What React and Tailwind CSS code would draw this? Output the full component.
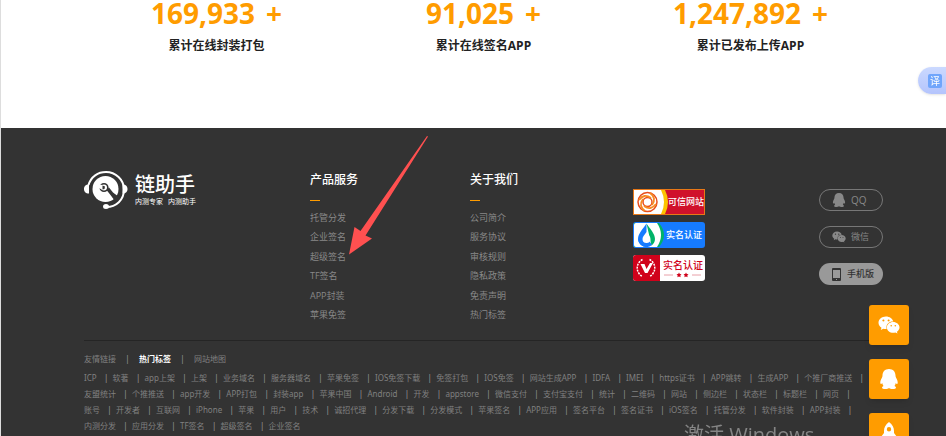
import { FaWeixin } from "react-icons/fa";

const stats = [
  { value: "169,933", label: "累计在线封装打包" },
  { value: "91,025", label: "累计在线签名APP" },
  { value: "1,247,892", label: "累计已发布上传APP" },
];

const products = ["托管分发", "企业签名", "超级签名", "TF签名", "APP封装", "苹果免签"];
const about = ["公司简介", "服务协议", "审核规则", "隐私政策", "免责声明", "热门标签"];

const tagRows = [
  ["ICP", "软著", "app上架", "上架", "业务域名", "服务器域名", "苹果免签", "IOS免签下载", "免签打包", "IOS免签", "网站生成APP", "IDFA", "IMEI", "https证书", "APP跳转", "生成APP", "个推厂商推送"],
  ["友盟统计", "个推推送", "app开发", "APP打包", "封装app", "苹果中国", "Android", "开发", "appstore", "微信支付", "支付宝支付", "统计", "二维码", "网站", "侧边栏", "状态栏", "标题栏", "网页"],
  ["账号", "开发者", "互联网", "iPhone", "苹果", "用户", "技术", "诚招代理", "分发下载", "分发模式", "苹果签名", "APP应用", "签名平台", "签名证书", "iOS签名", "托管分发", "软件封装", "APP封装"],
  ["内测分发", "应用分发", "TF签名", "超级签名", "企业签名"],
];

function PenguinIcon({ className }) {
  return (
    <svg viewBox="0 0 20 20" className={className} fill="currentColor" aria-hidden="true">
      <path d="M10 0c4 0 6.500 2.800 6.500 6.500 0 1 .2 1.600.7 2.500 1 1.700 1.600 3.300 1.500 4.800-.1 1.300-.6 1.600-1.300.9l-.6-.6c-.2 1.100-.6 2-1.300 2.800 1 .4 1.500.9 1.500 1.500 0 1-1.400 1.600-3.500 1.600-1.500 0-2.700-.4-3.500-1-.8.6-2 1-3.500 1C4.400 20 3 19.400 3 18.400c0-.6.5-1.100 1.500-1.500-.7-.8-1.100-1.700-1.300-2.800l-.6.600c-.7.7-1.200.4-1.300-.9-.1-1.500.5-3.100 1.500-4.800.5-.9.7-1.500.7-2.500C3.500 2.800 6 0 10 0z" />
    </svg>
  );
}

function Logo() {
  return (
    <a href="#" className="flex h-10 items-start text-white">
      <svg viewBox="0 0 44 40" className="h-10 w-11 shrink-0" aria-hidden="true">
        <path d="M4.500 15C7 6.500 14 2 22 2c9.500 0 18 7.500 18 17.500C40 30 32 37 22.500 37" fill="none" stroke="currentColor" strokeWidth="2" />
        <path d="M5 14.500v9C1.500 23.500 0 21.500 0 19s1.500-4.500 5-4.500zM38.500 14.500v9C42 23.500 43.500 21.500 43.500 19s-1.500-4.500-5-4.500z" fill="currentColor" />
        <ellipse cx="22" cy="36.500" rx="3" ry="2.500" fill="currentColor" />
        <circle cx="21.500" cy="19" r="13" fill="currentColor" />
        <circle cx="20" cy="17.500" r="3.800" fill="none" stroke="#333" strokeWidth="1.600" />
        <path d="M22.500 20l4 5 4.500 6 4-4-6-4.500-4-5z" fill="#333" />
        <path d="M14 14.500l5 .5 1 3-2 1.500-3.500-1.500z" fill="#fff" />
        <path d="M18.500 15.500l2.500 1-.5 2.500-2 .500z" fill="#333" />
      </svg>
      <span className="ml-[7px] mt-[4px] flex flex-col">
        <span className="text-[20px] font-medium leading-[21px]">链助手</span>
        <span className="mt-[2px] flex gap-[5px] text-[7px] leading-[10px]">
          <span>内测专家</span>
          <span>内测助手</span>
        </span>
      </span>
    </a>
  );
}

function LinkColumn({ title, items }) {
  return (
    <div>
      <h3 className="text-[12px] font-medium leading-5 text-white">{title}</h3>
      <div className="mt-[10px] h-px w-[10px] bg-[#ff9c00]" />
      <ul className="mt-[9px] flex h-[113px] flex-col justify-between text-[9px] leading-4 text-[#888]">
        {items.map((item) => (
          <li key={item}>
            <a href="#">{item}</a>
          </li>
        ))}
      </ul>
    </div>
  );
}

function Badges() {
  return (
    <div className="mt-[19px] flex flex-col gap-[7px]">
      <a href="#" className="flex h-[26px] w-[72px] items-center overflow-hidden border border-[#e87817] bg-[#d0112b] text-[9px] font-medium leading-3 text-white">
        <svg viewBox="0 0 34 24" className="h-6 w-[34px] shrink-0" aria-hidden="true">
          <path d="M0 0h31q6 12 0 24H0z" fill="#fcc400" />
          <path d="M0 0h27q6 12 0 24H0z" fill="#fff" />
          <g fill="none" stroke="#e84d1c" strokeWidth="1.500">
            <circle cx="13.500" cy="12" r="9.500" />
            <circle cx="13.500" cy="12" r="4.500" />
          </g>
          <g fill="none" stroke="#f58a22" strokeWidth="1.800">
            <path d="M5 10q5-7 12-2M16 3q7 5 2 12M22 14q-5 7-12 2M11 21q-7-5-2-12" />
          </g>
        </svg>
        <span>可信网站</span>
      </a>
      <a href="#" className="flex h-[26px] w-[72px] items-center overflow-hidden rounded-[3px] bg-[#167bff] text-[9px] font-medium leading-3 text-white">
        <svg viewBox="0 0 33 26" className="h-[26px] w-[33px] shrink-0" aria-hidden="true">
          <path d="M1 1h25q10 12 0 24H1z" fill="#00b368" />
          <path d="M3 1h21q8 12 0 24H3q-2 0-2-2V3q0-2 2-2z" fill="#fff" />
          <path d="M13.500 1.500C10 7 5 11.500 5 17a8.500 8.500 0 0 0 8.500 8V1.500z" fill="#167bff" />
          <path d="M13.500 1.500C17 7 22 11.500 22 17c0 3-1.500 5-3.500 6.500z" fill="#00b368" />
          <path d="M5 17a8.500 8.500 0 0 0 14 6l-4-6z" fill="#167bff" />
          <path d="M13.500 10c-2 3-4 4.500-4 7a4 4 0 0 0 8 0c0-2.500-2-4-4-7z" fill="#fff" />
        </svg>
        <span>实名认证</span>
      </a>
      <a href="#" className="flex h-[26px] w-[72px] items-center overflow-hidden rounded-[3px] bg-white text-[10px] font-medium leading-3 text-[#d0021b]">
        <svg viewBox="0 0 27 26" className="h-[26px] w-[27px] shrink-0" aria-hidden="true">
          <path d="M0 0h27v26H0z" fill="#d0021b" />
          <path d="M7.500 9h4l2 5L17 8h3l-5.500 10h-2.500z" fill="#fff" />
          <path d="M9.500 4.500a9.500 9.500 0 0 0 0 17M16.500 4.500a9.500 9.500 0 0 1 0 17" fill="none" stroke="#fff" strokeWidth="1.500" strokeDasharray="2 1" />
        </svg>
        <span className="ml-[3px] flex flex-col items-center">
          <span className="leading-[14px]">实名认证</span>
          <svg viewBox="0 0 40 6" className="h-[6px] w-10" aria-hidden="true">
            <path d="M1 3h9M29 3h9" stroke="#e8a0a8" />
            <path d="M16 .5l.8 1.500 1.700.3-1.200 1.200.3 1.800-1.600-.8-1.600.8.3-1.800-1.200-1.200 1.700-.3zM23 .5l.8 1.500 1.700.3-1.200 1.200.3 1.800-1.600-.8-1.600.8.3-1.800-1.200-1.200 1.700-.3z" fill="#d0021b" />
          </svg>
        </span>
      </a>
    </div>
  );
}

function ContactButtons() {
  return (
    <div className="mt-[19px] flex flex-col gap-[15px] text-[9px] leading-3 text-[#888]">
      <button type="button" className="flex h-[22px] w-16 items-center rounded-full border border-[#777] pl-[12px]">
        <PenguinIcon className="size-[14px]" />
        <span className="ml-[5px] text-[10px]">QQ</span>
      </button>
      <button type="button" className="flex h-[22px] w-16 items-center rounded-full border border-[#777] pl-[12px]">
        <FaWeixin className="size-[14px]" />
        <span className="ml-[5px]">微信</span>
      </button>
      <button type="button" className="flex h-[22px] w-16 items-center rounded-full bg-[#999] pl-[13px] text-[#333]">
        <svg viewBox="0 0 9 13" className="h-[13px] w-[9px]" aria-hidden="true">
          <path fillRule="evenodd" d="M1 0h7q1 0 1 1v11q0 1-1 1H1q-1 0-1-1V1q0-1 1-1zm0 2v8h7V2zm3 9v1h1v-1z" fill="currentColor" />
        </svg>
        <span className="ml-[6px] font-medium">手机版</span>
      </button>
    </div>
  );
}

function FloatingTools() {
  const tool = "flex size-10 items-center justify-center rounded-[3px] bg-[#ff9c00] text-white shadow-md";
  return (
    <div className="fixed right-[37px] top-[305px] flex flex-col gap-[14px]">
      <button type="button" aria-label="微信" className={tool}>
        <FaWeixin className="size-[22px]" />
      </button>
      <button type="button" aria-label="QQ" className={tool}>
        <PenguinIcon className="size-5" />
      </button>
      <button type="button" aria-label="返回顶部" className={tool}>
        <svg viewBox="0 0 20 22" className="h-[22px] w-5" aria-hidden="true">
          <path fillRule="evenodd" d="M10 0c3.500 2.500 5 5.500 5 9v2l3 4v4l-4-2H6l-4 2v-4l3-4V9c0-3.500 1.500-6.500 5-9zm0 5a2.200 2.200 0 1 0 0 4.400A2.200 2.200 0 0 0 10 5z" fill="currentColor" />
        </svg>
      </button>
    </div>
  );
}

export default function App() {
  return (
    <div className="flex h-screen flex-col overflow-hidden border-l border-[#ddd] bg-white font-['Open_Sans','Noto_Sans_CJK_SC',sans-serif]">
      <section className="h-32 shrink-0 pl-[82px] pr-[62px]">
        <div className="grid grid-cols-3 text-center font-bold">
          {stats.map((stat) => (
            <div key={stat.label}>
              <p className="flex justify-center gap-[11px] text-[28px] leading-[26px] text-[#ff9c00]">
                <span>{stat.value}</span>
                <span>+</span>
              </p>
              <p className="mt-[11px] text-[12px] leading-[18px] text-[#222]">{stat.label}</p>
            </div>
          ))}
        </div>
      </section>

      <footer className="grow bg-[#333] pl-[83px] pr-[63px] pt-[42px]">
        <div className="grid grid-cols-[226fr_160fr_163fr_186fr_64px]">
          <Logo />
          <LinkColumn title="产品服务" items={products} />
          <LinkColumn title="关于我们" items={about} />
          <Badges />
          <ContactButtons />
        </div>

        <div className="mt-[17px] border-t border-[#252525] pt-[10px] font-['Noto_Sans','Noto_Sans_CJK_SC',sans-serif] text-[8px] leading-4 text-[#808080]">
          <nav className="flex">
            <a href="#">友情链接</a>
            <span className="w-[23px] text-center text-[#999]">|</span>
            <a href="#" className="font-bold text-white">热门标签</a>
            <span className="w-[23px] text-center text-[#999]">|</span>
            <a href="#">网站地图</a>
          </nav>
          <div className="mt-[3px]">
            {tagRows.map((row, r) => (
              <ul key={r} className="flex whitespace-nowrap">
                {row.map((tag, i) => (
                  <li key={tag} className="flex">
                    <a href="#">{tag}</a>
                    {(r < 3 || i < row.length - 1) && <span className="w-4 pl-[3px] text-center text-[#999]">|</span>}
                  </li>
                ))}
              </ul>
            ))}
          </div>
        </div>
      </footer>

      <button type="button" className="fixed right-0 top-[67px] flex h-[27px] w-7 items-center rounded-l-full bg-linear-to-b from-[#cbd9ff] to-[#b4c4fc] pl-[10px] shadow-sm">
        <span className="flex size-[14px] items-center justify-center rounded-[2px] bg-[#70a5fb] text-[10px] leading-[14px] text-white">译</span>
      </button>

      <FloatingTools />

      <p className="fixed left-[684px] top-[421px] whitespace-nowrap text-[20px] leading-7 text-[#858585]">激活 Windows</p>

      <svg viewBox="0 0 80 120" className="pointer-events-none fixed left-[349px] top-[135px] h-[120px] w-20" aria-hidden="true">
        <path d="M78 1L11.500 96 5.500 92 0 119.500 23 103.500 16.500 100.500 79 1.500z" fill="#ff5050" />
      </svg>
    </div>
  );
}
